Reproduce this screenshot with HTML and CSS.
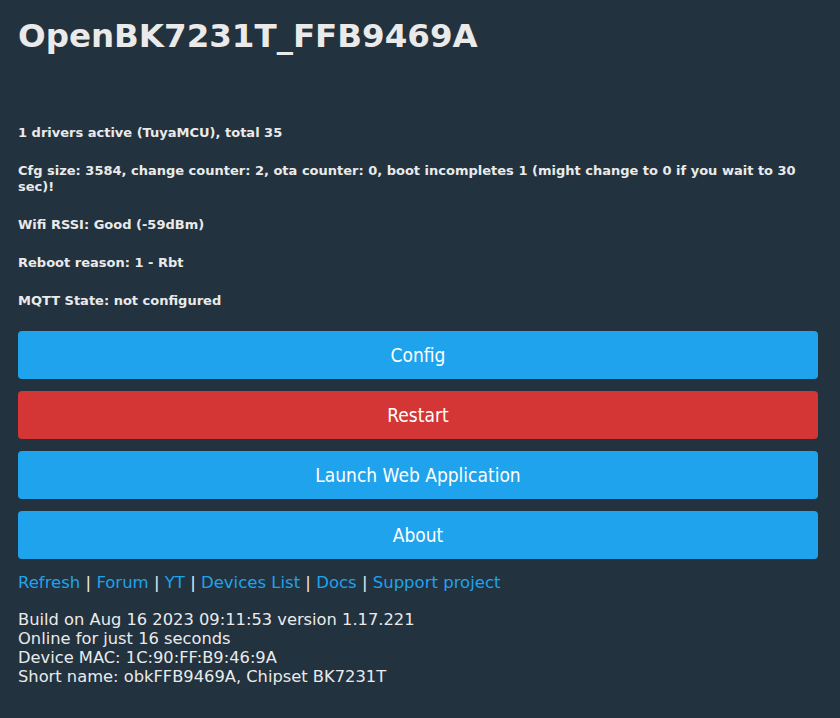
FILE: index.html
```html
<!DOCTYPE html>
<html>
<head>
<meta charset="utf-8">
<link rel="stylesheet" href="styles.css">
</head>
<body>
<div class="page">
  <h1 class="title">OpenBK7231T_FFB9469A</h1>
  <div class="info">
    <p>1 drivers active (TuyaMCU), total 35</p>
    <p>Cfg size: 3584, change counter: 2, ota counter: 0, boot incompletes 1 (might change to 0 if you wait to 30 sec)!</p>
    <p>Wifi RSSI: Good (-59dBm)</p>
    <p>Reboot reason: 1 - Rbt</p>
    <p>MQTT State: not configured</p>
  </div>
  <div class="buttons">
    <button class="btn">Config</button>
    <button class="btn red">Restart</button>
    <button class="btn">Launch Web Application</button>
    <button class="btn">About</button>
  </div>
  <div class="links">
    <a href="#">Refresh</a> | <a href="#">Forum</a> | <a href="#">YT</a> | <a href="#">Devices List</a> | <a href="#">Docs</a> | <a href="#">Support project</a>
  </div>
  <div class="build">
    <div>Build on Aug 16 2023 09:11:53 version 1.17.221</div>
    <div>Online for just 16 seconds</div>
    <div>Device MAC: 1C:90:FF:B9:46:9A</div>
    <div>Short name: obkFFB9469A, Chipset BK7231T</div>
  </div>
</div>
</body>
</html>
```
FILE: styles.css
```css
html, body {
  margin: 0;
  padding: 0;
  background: #22323f;
}
body {
  color: #eaeaea;
  font-family: "DejaVu Sans", Verdana, sans-serif;
}
.page {
  padding: 0 22px 0 18px;
}
.title {
  margin: 0;
  padding-top: 16px;
  font-size: 32.5px;
  line-height: 40px;
  font-weight: bold;
  height: 109px;
}
.info {
  font-size: 13px;
  font-weight: bold;
}
.info p {
  margin: 0 0 22px 0;
  line-height: 16px;
}
.buttons {
  display: flex;
  flex-direction: column;
  gap: 12px;
}
.btn {
  border: 0;
  border-radius: 4px;
  background: #1fa3ec;
  color: #fff;
  height: 48px;
  font-family: "DejaVu Sans Condensed", "DejaVu Sans", sans-serif;
  font-size: 19px;
  width: 100%;
}
.btn.red { background: #d43535; }
.links {
  margin-top: 13px;
  font-size: 16.5px;
  line-height: 22px;
  color: #eaeaea;
}
.links a {
  color: #1fa3ec;
  text-decoration: none;
}
.build {
  margin-top: 16px;
  font-size: 16.3px;
  line-height: 19px;
}
```
